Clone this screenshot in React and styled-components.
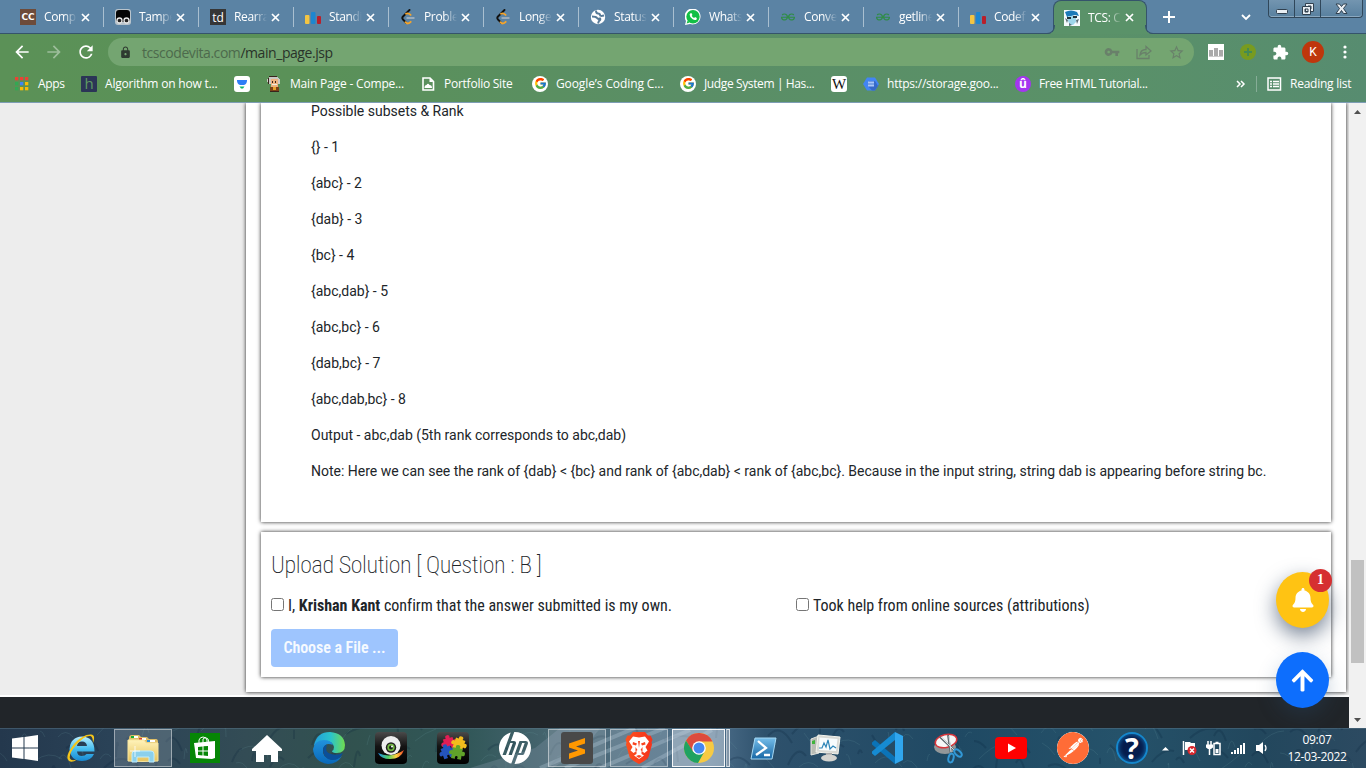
import React from "react";
import styled, { createGlobalStyle, css } from "styled-components";
import { MdVpnKey, MdStarBorder, MdExtension, MdLock, MdRefresh, MdArrowBack, MdArrowForward } from "react-icons/md";
import { FaBell, FaArrowUp } from "react-icons/fa";
import { FcGoogle } from "react-icons/fc";
import { SiGeeksforgeeks, SiHp, SiPostman } from "react-icons/si";

const Global = createGlobalStyle`
  * { box-sizing: border-box; }
  html, body { margin: 0; height: 100%; overflow: hidden; }
  svg { display: block; flex: none; }
`;

const ui = css`
  font-family: "Open Sans", "Noto Sans", sans-serif;
  font-size: 12px;
  letter-spacing: ${(p) => p.$ls ?? -0.35}px;
  white-space: nowrap;
`;

const Desktop = styled.div`
  width: 1366px;
  height: 768px;
  display: flex;
  flex-direction: column;
  background: #fff;
  overflow: hidden;
`;

/* ---------- browser chrome ---------- */
const TabStrip = styled.div`
  height: 34px;
  flex: none;
  display: flex;
  padding-left: 9px;
  background: #5b83a4;
  border-bottom: 1px solid #35546b;
`;
const Tab = styled.div`
  width: 95px;
  height: 33px;
  flex: none;
  display: flex;
  align-items: center;
  padding: 1px 0 0 11px;
  background: linear-gradient(#a9bfd0, #a9bfd0) right 0 top 7px / 1px 20px no-repeat;
`;
const ActiveTab = styled(Tab)`
  position: relative;
  width: 94px;
  height: 34px;
  margin-left: -1px;
  padding: 0 0 0 10px;
  border: 1px solid #35546b;
  border-bottom: 0;
  border-radius: 8px 8px 0 0;
  background: #5a9269;
  &::before, &::after {
    content: "";
    position: absolute;
    bottom: 0;
    width: 8px;
    height: 8px;
    border-bottom: 1px solid #35546b;
  }
  &::before { left: -8px; border-right: 1px solid #35546b; border-radius: 0 0 8px 0; box-shadow: 3px 3px 0 1px #5a9269; clip-path: inset(0 -1px 0 0); }
  &::after { right: -8px; border-left: 1px solid #35546b; border-radius: 0 0 0 8px; box-shadow: -3px 3px 0 1px #5a9269; clip-path: inset(0 0 0 -1px); }
`;
const Favicon = styled.div`
  width: 16px;
  height: 16px;
  flex: none;
  display: flex;
  align-items: center;
  justify-content: center;
  overflow: hidden;
  border-radius: ${(p) => p.$r || 0}px;
  background: ${(p) => p.$bg || "transparent"};
  color: ${(p) => p.$fg || "#fff"};
  font: ${(p) => p.$font || 'bold 10px/16px "Liberation Sans", sans-serif'};
`;
const TabTitle = styled.div`
  ${ui}
  width: 33px;
  margin-left: 8px;
  overflow: hidden;
  color: #fff;
  line-height: 18px;
  mask-image: linear-gradient(90deg, #000 60%, transparent 100%);
`;
const TabClose = styled.div`
  margin-left: 4px;
`;
const NewTab = styled.div`
  width: 40px;
  display: flex;
  align-items: center;
  justify-content: center;
  margin-left: 2px;
`;
const StripEnd = styled.div`
  margin-left: auto;
  display: flex;
  margin-right: 3px;
`;
const Chevron = styled.div`
  padding: 14px 17px 0 0;
`;
const WinButtons = styled.div`
  display: flex;
  height: 18px;
  border: 1px solid #30475a;
  border-top: 0;
  border-radius: 0 0 4px 4px;
  background: linear-gradient(#7395b0, #58809f);
  box-shadow: inset 0 -1px 0 #8ba8bf;
`;
const WinButton = styled.div`
  width: ${(p) => p.$w}px;
  display: flex;
  align-items: center;
  justify-content: center;
  & + & { border-left: 1px solid #30475a; }
`;
const Toolbar = styled.div`
  height: 69px;
  flex: none;
  background: linear-gradient(90deg, #5b9157 0%, #5a9158 22%, #5a8e66 50%, #5a9168 80%, #578c70 100%);
  border-bottom: 1px solid #7d9db5;
`;
const NavRow = styled.div`
  display: flex;
  height: 36px;
  align-items: center;
  padding: 0 0 0 12px;
`;
const NavIcon = styled.div`
  width: 32px;
  display: flex;
  color: #fff;
  opacity: ${(p) => (p.$off ? 0.4 : 1)};
`;
const Omnibox = styled.div`
  width: 1086px;
  height: 28px;
  border-radius: 14px;
  background: #74a571;
  display: flex;
  align-items: center;
  padding: 0 9px 0 11px;
  color: #2e3a30;
`;
const Url = styled.div`
  ${ui}
  font-size: 14px;
  margin-left: 10px;
  color: #293329;
  flex: 1;
  span { color: #4d6a4c; }
`;
const OmniIcons = styled.div`
  display: flex;
  align-items: center;
  gap: 16px;
  color: #69806a;
`;
const Extensions = styled.div`
  display: flex;
  align-items: center;
  gap: 16px;
  margin-left: 14px;
  color: #fff;
`;
const Avatar = styled.div`
  width: 22px;
  height: 22px;
  margin: 0 -3px;
  border-radius: 50%;
  background: #bf360c;
  color: #fff;
  font: 12px/22px Roboto, sans-serif;
  text-align: center;
`;
const Bookmarks = styled.div`
  display: flex;
  height: 28px;
  align-items: center;
  margin-top: -1px;
  padding: 1px 0 0 14px;
`;
const Bookmark = styled.div`
  display: flex;
  align-items: center;
  width: ${(p) => p.$w}px;
  flex: none;
`;
const BookmarkText = styled.div`
  ${ui}
  color: #fff;
  margin-left: 8px;
`;
const Divider = styled.div`
  width: 1px;
  height: 16px;
  background: #86ad97;
  margin-right: 10px;
`;

/* ---------- web page ---------- */
const Viewport = styled.div`
  height: 625px;
  flex: none;
  display: flex;
  overflow: hidden;
  position: relative;
`;
const Page = styled.div`
  width: 1349px;
  display: flex;
  flex-direction: column;
  color: #212529;
`;
const Body = styled.div`
  height: 592px;
  background: #ededed;
  padding: 0 3px 3px 246px;
`;
const Sheet = styled.div`
  height: 589px;
  background: #fff;
  box-shadow: 0 0 4px 0 #222;
  padding: 0 15px;
  display: flex;
  flex-direction: column;
  gap: 10px;
`;
const Card = styled.div`
  height: ${(p) => p.$h}px;
  flex: none;
  background: #fff;
  box-shadow: 0 0 4px 0 #222;
`;
const Question = styled(Card)`
  padding: 0 50px;
  font: 14px/21px Roboto, sans-serif;
  letter-spacing: -0.005px;
  p { margin: 0 0 15px; white-space: nowrap; }
  p:first-child { margin-top: -2px; }
`;
const Upload = styled(Card)`
  padding: 19px 10px 0;
  font-family: "Roboto Condensed", Roboto, sans-serif;
  font-stretch: 75%;
`;
const Title = styled.h4`
  margin: 0;
  font-size: 24px;
  line-height: 29px;
  font-weight: 250;
  letter-spacing: -0.37px;
  white-space: nowrap;
`;
const Checks = styled.div`
  display: grid;
  grid-template-columns: 525px 1fr;
  margin-top: 13px;
`;
const Check = styled.label`
  display: flex;
  align-items: center;
  height: 24px;
  font-size: 16px;
  letter-spacing: -0.01px;
  white-space: pre;
`;
const Box = styled.span`
  width: 13px;
  height: 13px;
  margin: 0 4px 2px 0;
  border: 1px solid #767676;
  border-radius: 2.5px;
  background: #fff;
`;
const FileButton = styled.button`
  display: block;
  width: 127px;
  height: 38px;
  margin-top: 12px;
  padding: 0 0 2px;
  border: 0;
  border-radius: 4px;
  background: #9ec5fe;
  color: #f6faff;
  font: inherit;
  font-stretch: 75%;
  font-weight: 600;
  font-size: 16px;
  letter-spacing: -0.06px;
  white-space: nowrap;
`;
const Footer = styled.div`
  height: 31px;
  margin-top: 2px;
  background: #212529;
`;
const Scrollbar = styled.div`
  width: 17px;
  background: #f1f1f1;
  display: flex;
  flex-direction: column;
  align-items: center;
`;
const Thumb = styled.div`
  width: 13px;
  height: 103px;
  margin-top: 440px;
  margin-bottom: 47px;
  background: #c1c1c1;
`;
const Floating = styled.div`
  position: absolute;
  left: 1276px;
  top: ${(p) => p.$top}px;
  width: 53px;
  height: 56px;
  border-radius: 50%;
  background: ${(p) => p.$bg};
  box-shadow: 0 8px 20px ${(p) => p.$glow};
  color: #fff;
  display: flex;
  align-items: center;
  justify-content: center;
`;
const Badge = styled.div`
  position: absolute;
  left: 33px;
  top: -3px;
  width: 23px;
  height: 23px;
  border-radius: 50%;
  background: #d63031;
  font: bold 14px/22px "Liberation Serif", serif;
  text-align: center;
`;

/* ---------- taskbar ---------- */
const Taskbar = styled.div`
  height: 40px;
  flex: none;
  display: flex;
  align-items: center;
  position: relative;
  isolation: isolate;
  background: linear-gradient(90deg, #24384d 0%, #2a4257 8%, #334c55 18%, #31524f 26%, #315758 34%, #4b6875 42%, #4f708c 52%, #2e516c 56%, #1f4963 70%, #25526a 82%, #22475d 92%, #2c4a61 100%);
`;
const Texture = styled.svg`
  position: absolute;
  inset: 0;
  z-index: -1;
`;
const Slot = styled.div`
  width: ${(p) => p.$w || 62}px;
  height: 40px;
  flex: none;
  display: flex;
  align-items: center;
  justify-content: center;
`;
const Running = styled.div`
  width: ${(p) => p.$w || 58}px;
  height: 38px;
  display: flex;
  align-items: center;
  justify-content: center;
  border: 1px solid rgba(255, 255, 255, ${(p) => (p.$on ? 0.9 : 0.45)});
  background: rgba(210, 220, 230, ${(p) => (p.$on ? 0.5 : 0.2)});
`;
const Stacked = styled.div`
  width: 4px;
  height: 38px;
  margin-left: 1px;
  border: 1px solid #dbe2e8;
  border-left-color: #b8c5d0;
  background: #8296a8;
`;
const AppTile = styled.div`
  width: 32px;
  height: 32px;
  border-radius: 3px;
  background: ${(p) => p.$bg};
  display: flex;
  align-items: center;
  justify-content: center;
`;
const Round = styled.div`
  width: 32px;
  height: 32px;
  border-radius: 50%;
  display: flex;
  align-items: center;
  justify-content: center;
  overflow: hidden;
  background: ${(p) => p.$bg};
  color: ${(p) => p.$fg || "#fff"};
`;
const HelpMark = styled(Round)`
  border: 2px solid #1587cc;
  box-shadow: inset 0 0 5px #1779bd;
  font: bold 29px/28px "Open Sans", sans-serif;
`;
const Tray = styled.div`
  display: flex;
  align-items: center;
  gap: 9px;
  margin-left: 1px;
`;
const Clock = styled.div`
  ${ui}
  width: 70px;
  margin-left: 13px;
  text-align: center;
  line-height: 17px;
  color: #fff;
`;

const X = () => (
  <svg width="9" height="9" viewBox="0 0 9 9"><path d="M1 1l7 7M8 1l-7 7" stroke="#fff" strokeWidth="1.7" /></svg>
);
const Bars = () => (
  <svg width="16" height="16"><rect y="6" width="4.5" height="9" rx="1" fill="#f4c542" /><rect x="6" y="3" width="4.5" height="12" rx="1" fill="#1d86d0" /><rect x="12" y="7" width="4" height="8" rx="1" fill="#b91f2b" /></svg>
);
const Leet = () => (
  <svg width="16" height="16" viewBox="0 0 16 16" fill="none" strokeLinecap="round" strokeWidth="1.9"><path d="M9.5 1L3 7.5c-1 1-1 2 0 3L6 13.7" stroke="#111" /><path d="M6 4.8c1.6-1 2.8-.6 4.6 1.1M5.5 13.2c1.8 2 3.4 1.4 5.2-.4" stroke="#f5a42a" /><path d="M7 9h7" stroke="#aebbc5" strokeWidth="1.4" /></svg>
);
const Globe = () => (
  <svg width="16" height="16"><circle cx="8" cy="8" r="7.2" fill="#fff" /><path d="M2 7.500q4 0 5 1.500t3 .5q1 1-1 2.500l-1 2.500M6 1.500q0 3 2 3t2 1.500 4 .5" fill="none" stroke="#557997" strokeWidth="2" /></svg>
);
const Whats = () => (
  <svg width="16" height="16" viewBox="0 0 16 16"><path d="M0 16l1-4A8 8 0 1 1 5 15z" fill="#fff" /><circle cx="8" cy="7.8" r="6.7" fill="#12bf45" /><path d="M1.600 14.600l1-3 2 2z" fill="#12bf45" /><path d="M5.4 4.2l1.3.1.7 1.7-.7.8q.9 1.6 2.5 2.3l.8-1 1.8.9-.2 1.4q-1.5 1.3-3.9-.1Q4.6 8.300 4.600 5.500z" fill="#fff" /></svg>
);
const Tamper = () => (
  <svg width="16" height="16"><rect width="16" height="16" rx="3" fill="#b9c4cc" /><rect x="1" y="1" width="14" height="12" rx="3" fill="#050505" /><g fill="#222" stroke="#e8e8e8" strokeWidth="1.3"><circle cx="4.500" cy="11.500" r="2.500" /><circle cx="11.500" cy="11.500" r="2.500" /></g></svg>
);
const TcsIcon = () => (
  <svg width="16" height="16"><rect width="16" height="16" fill="#f5fafc" /><path d="M1 2q6-3 12 0l2 4-4-1-8 2z" fill="#1c79b8" /><path d="M4 6h8v6l-3 3H6l-2-4z" fill="#9ed6ea" /><path d="M3 7h4v2H3zM9 6h4v2H9z" fill="#24323a" /><path d="M1 8l3 2-1 3zM12 10l3-1-2 5zM5 13l3 2-3 1z" fill="#5a6d77" /></svg>
);
const AppsGrid = () => (
  <svg width="16" height="16">
    {["#ea4335", "#ea4335", "#ea4335", "#34a853", "#4285f4", "#fbbc05", "#34a853", "#fbbc05", "#fbbc05"].map((c, i) => (
      <rect key={i} x={1 + (i % 3) * 5} y={1 + Math.floor(i / 3) * 5} width="3.300" height="3.300" fill={c} />
    ))}
  </svg>
);
const Funnel = () => (
  <svg width="16" height="16"><rect width="16" height="16" rx="3" fill="#fff" /><path d="M3 4h10v1q-.5 3.500-3 4H6Q3.500 8.500 3 5z" fill="#2e7df6" /><path d="M5.500 10.500h5l-1.500 2H7z" fill="#11b36b" /></svg>
);
const Einstein = () => (
  <svg width="16" height="16" shapeRendering="crispEdges"><path d="M3 1h9l2 3v4H2L1 4z" fill="#c9c9c4" /><path d="M5 3h7v8H5z" fill="#eeb27e" /><path d="M6 5h1v2H6zM9 5h1v2H9z" fill="#3c241c" /><path d="M6 8h5v1H6z" fill="#ecece6" /><path d="M4 11h9v4H4z" fill="#7b4217" /><path d="M7 11h3v3H7z" fill="#e7a12c" /><path d="M2 2h1v6H2zM4 15h9v1H4zM3 0h8v1H3z" fill="#38241c" /></svg>
);
const PageIcon = () => (
  <svg width="16" height="16"><path d="M3 2h7l3.500 3.500V14H3z" fill="none" stroke="#fff" strokeWidth="1.600" /><path d="M9.500 2v4h4M4.500 12q0-3 2-3 1.500-2.500 3 0 2.500 0 2.500 3z" fill="#fff" /></svg>
);
const Hexagon = () => (
  <svg width="16" height="16"><path d="M4 1.500h8L16 8l-4 6.500H4L0 8z" fill="#4285f4" /><path d="M6 5l6 0 3 5-3 4.500H9L5 10z" fill="#3669c8" /><rect x="5" y="5.500" width="6" height="5" fill="#a9c6f8" /><path d="M5 8h6" stroke="#4d7fd2" /></svg>
);
const ReadIcon = () => (
  <svg width="15" height="14" fill="none" stroke="#fff" strokeWidth="1.500"><rect x="1" y="1" width="12.500" height="12" /><path d="M3 4.500h2M6 4.500h6M3 7h2M6 7h6M3 9.500h2M6 9.500h6" /></svg>
);
const Share = () => (
  <svg width="16" height="16" fill="none" stroke="currentColor" strokeWidth="1.300"><path d="M1 5v9.500h12V11" /><path d="M4 11q.5-5.500 6-5.500V2.500L15 7l-5 4V8.500Q6 8.500 4 11z" /></svg>
);
const ExtBars = () => (
  <svg width="16" height="16"><path fill="#fff" d="M0 0h16v16H0z" /><path d="M1 6h4v6H1zM6 4h4v8H6zM11 6h4v6h-4z" fill="#aaa" /><path d="M1 12h14v1H1z" fill="#ccc" /></svg>
);
const PlusDot = () => (
  <svg width="16" height="16"><circle cx="8" cy="8" r="8" fill="#789b20" /><path d="M4 8h8M8 4v8" stroke="#438a55" strokeWidth="1.800" /></svg>
);
const Caret = ({ down }) => (
  <svg width="17" height="17"><path d={down ? "M5 8h7l-3.500 4z" : "M5 11h7L8.500 7z"} fill="#505050" /></svg>
);

const IE = () => (
  <svg width="32" height="32" viewBox="0 0 32 32"><defs><linearGradient id="ie" x2="0" y2="1"><stop stopColor="#b9efff" /><stop offset=".5" stopColor="#48bff0" /><stop offset="1" stopColor="#1688d2" /></linearGradient></defs><path d="M29.500 19.500H12q.5 4.500 5 4.500 3 0 4.500-2H29q-3 7-12 7Q5.500 29 4.500 17 5.500 5 17 4.500q12.500 .5 12.500 15zM12 14h10Q21.500 9.500 17 9.500T12 14z" fill="url(#ie)" /><path d="M28 11q3-8-2-8.500Q18 2 9 12-1 25 4 29q3 2 8-1.500-6 2-7-1Q3.500 22 11 13 20 3 25.500 4q2.500 1 2.500 7z" fill="#f5c51a" /></svg>
);
const Folder = () => (
  <svg width="34" height="32" viewBox="0 0 34 32"><defs><linearGradient id="fold" x2="0" y2="1"><stop stopColor="#fff3ba" /><stop offset="1" stopColor="#e7c35b" /></linearGradient></defs><path d="M3 6q0-3 3-3h7l2 2h6l2 2h7q2 0 2 3v18H3z" fill="#dfbf68" /><path d="M5 4h5v2H5z" fill="#18ae35" /><path d="M13 6h5v2h-5z" fill="#dd3d28" /><path d="M21 8h7v2h-7z" fill="#278fda" /><path d="M8 4h4v2H8zM16 6h4v2h-4zM24 8h5v2h-5z" fill="#fff" /><path d="M2 8h16l2 3h12v18q-15 1-30 0z" fill="url(#fold)" stroke="#f8e5a0" /><path d="M6 30V22q0-3 3-3h16q3 0 3 3v8h-5v-5H11v5z" fill="#8bd0ec" stroke="#bcecff" /><path d="M9 14v11M4 19h10" stroke="#fff" strokeOpacity=".8" /></svg>
);
const Store = () => (
  <svg width="30" height="30"><path fill="#068606" d="M0 0h30v30H0z" /><path d="M9 10V7q1-3 4-3t4 3v3M13 10V6q2-3 5 0l1 4" fill="none" stroke="#fff" /><path d="M4 10l21-2v17l-3 1L6 25z" fill="#fff" /><path d="M8 14l4.500-.5v4H8zM13.500 13.300l4.500-.4v4.600h-4.500zM8 18.500h4.500v4L8 22zM13.500 18.500H18v4.600l-4.500-.5z" fill="#068606" /></svg>
);
const EdgeIcon = () => (
  <svg width="32" height="32" viewBox="0 0 32 32"><defs><linearGradient id="edA"><stop stopColor="#219fdd" /><stop offset=".55" stopColor="#2bc4ca" /><stop offset="1" stopColor="#71db4e" /></linearGradient><linearGradient id="edB" x2="0" y2="1"><stop stopColor="#2192dc" /><stop offset="1" stopColor="#0968b8" /></linearGradient></defs><path d="M1 13Q4 0 17 0q14 1 15 13 0 8-8 8-5 0-5-2 2-1 2-4-1-6-9-6Q5 9 1 14z" fill="url(#edA)" /><path d="M0 17q2-9 11-9 7 0 9 5-8-3-10 4-1 8 7 10 7 1 12-3-5 8-14 8Q1 30 0 17z" fill="url(#edB)" /><path d="M10 17q1-4 4-4-3 7 4 9 6 2 12-1-4 8-12 7-8-2-8-11z" fill="#0b4f99" /></svg>
);
const Webcam = () => (
  <svg width="32" height="32"><defs><linearGradient id="blk" x2="0" y2="1"><stop stopColor="#4a4a4a" /><stop offset=".45" stopColor="#141414" /><stop offset="1" stopColor="#000" /></linearGradient><linearGradient id="rain"><stop stopColor="#1d8be9" /><stop offset=".4" stopColor="#54d263" /><stop offset=".7" stopColor="#ffd23e" /><stop offset="1" stopColor="#ef4226" /></linearGradient></defs><rect width="32" height="32" rx="4" fill="url(#blk)" /><path d="M3 21q13 6 26-3-3 9-14 9Q6 27 3 21z" fill="url(#rain)" /><circle cx="16" cy="13.500" r="9.500" fill="#eee" /><circle cx="16" cy="15.500" r="5.200" fill="#222" /><circle cx="16" cy="15.500" r="3.700" fill="#71b640" /><circle cx="16" cy="15.500" r="2" fill="#172217" /><circle cx="17" cy="14.500" r="1" fill="#fff" /></svg>
);
const PuzzlePiece = ({ x, y, r, c }) => (
  <path transform={`translate(${x} ${y}) rotate(${r})`} fill={c} d="M-5-5h3q-1-3 2-3t2 3h3v3q3-1 3 2t-3 2v4H1q1-3-1-3t-1 3h-4V2q-3 1-3-1.500T-5-2z" />
);
const Puzzle = () => (
  <svg width="32" height="32"><rect width="32" height="32" rx="4" fill="url(#blk)" /><PuzzlePiece x={12} y={11} r={-15} c="#e21e55" /><PuzzlePiece x={22} y={12} r={20} c="#f2bc1d" /><PuzzlePiece x={10} y={20} r={-20} c="#2454bd" /><PuzzlePiece x={20} y={21} r={10} c="#61a32a" /></svg>
);
const Sublime = () => (
  <svg width="32" height="32"><path d="M8 11.500L24 6v5.500l-9 3 9 3v4L8 27v-5.500l9-3-9-3z" fill="#ff9800" /></svg>
);
const Brave = () => (
  <svg width="28" height="32" viewBox="0 0 28 32"><defs><linearGradient id="brv"><stop stopColor="#fb5220" /><stop offset="1" stopColor="#f5321b" /></linearGradient></defs><path d="M8 0h12l3 3.500h2.500l2 4-1 3 .5 2-3.500 12.500Q22 28 14 32 6 28 4.500 25L1 12.500l.5-2-1-3 2-4H5z" fill="url(#brv)" /><path d="M8 4.500l6 1 6-1 4 5-3.500 5.500 2 3.500-3 2.500-3-2 0 3 2.500 1.500-5 3.500-5-3.500 2.500-1.500v-3l-3 2-3-2.500 2-3.500L4 9.500z" fill="#fff" /><path d="M8 10l4 1.500-1 2-3.500-1zM20 10l-4 1.500 1 2 3.500-1zM10.500 15l2 3-2 1.500zM17.500 15l-2 3 2 1.500zM13 9h2l-1 7zM11 24l3-1 3 1-3 2z" fill="#f84420" /></svg>
);
const Chrome = () => (
  <svg width="30" height="30" viewBox="0 0 30 30"><circle cx="15" cy="15" r="15" fill="#f7ca43" /><path d="M2 7.500A15 15 0 0 1 28.500 8.500H15L8.500 18.500z" fill="#dd4b3e" /><path d="M2 7.500A15 15 0 0 0 14 30l6.500-11.500H9z" fill="#20a261" /><circle cx="15" cy="15" r="6.800" fill="#fff" /><circle cx="15" cy="15" r="5.500" fill="#4688f1" /></svg>
);
const PowerShell = () => (
  <svg width="27" height="23"><defs><linearGradient id="ps" x2="0" y2="1"><stop stopColor="#75bde9" /><stop offset="1" stopColor="#1767a5" /></linearGradient></defs><path d="M5 1h21l-4 21H1z" fill="url(#ps)" stroke="#a5d8f3" /><path d="M8 4l8 7-10 7M14 18h6" fill="none" stroke="#fff" strokeWidth="2.300" /></svg>
);
const Monitor = () => (
  <svg width="32" height="32"><path d="M2 7l8-3v17l-8 2z" fill="#b9bcb5" stroke="#e5e5df" /><path d="M3 9l3-1v4H3z" fill="#3fb43b" /><path d="M9 3l22 2-2 17L7 20z" fill="#d9dad5" stroke="#f5f5ee" /><path d="M10.500 5.500L28.500 7 27 19l-17-1z" fill="#f8fcfd" /><path d="M10 16h3l2-5 2 4 2-7 2 9 3-3 3 2" fill="none" stroke="#2f86b8" strokeWidth="1.200" /><path d="M17 21h6v4h-6z" fill="#aaa" /><ellipse cx="20" cy="26" rx="8" ry="3.500" fill="#d3d3cf" /></svg>
);
const VSCode = () => (
  <svg width="32" height="32"><path d="M1 10.500l3-2.500 20 17v7L1 12.500z" fill="#0b73b7" /><path d="M1 21.500L4 24 24 8V0L1 19.500z" fill="#168bd2" /><path d="M24 0l8 4v24l-8 4z" fill="#30a6ee" /></svg>
);
const Snip = () => (
  <svg width="32" height="32"><ellipse cx="12" cy="15" rx="11" ry="7" fill="#939799" /><ellipse cx="13" cy="9" rx="11" ry="6.500" transform="rotate(-14 13 9)" fill="#f6f6f6" stroke="#d7353b" strokeWidth="1.500" /><path d="M7 5l15 14M15 3l3 20" stroke="#626a70" strokeWidth="2" /><path d="M8 5l14 14M16 4l2 16" stroke="#d6dce0" /><g fill="none" stroke="#3298d6" strokeWidth="2"><ellipse cx="18" cy="26" rx="2.500" ry="4.500" transform="rotate(15 18 26)" /><ellipse cx="25" cy="21" rx="2.500" ry="4.500" transform="rotate(-45 25 21)" /></g></svg>
);
const YouTube = () => (
  <svg width="32" height="22"><rect width="32" height="22" rx="4" fill="#f00" /><path d="M13 6.500l8 4.500-8 4.500z" fill="#fff" /></svg>
);
const Grass = () => {
  const blades = Array.from({ length: 170 }, (_, i) => {
    const x = (i * 83) % 1366;
    const y = (i * 29) % 44;
    const dx = ((i * 17) % 46) - 18;
    return `M${x} ${y}q${dx / 2} ${-14 + (i % 9)} ${dx} ${(i * 13) % 30 - 17}`;
  });
  return (
    <Texture width="1366" height="40" fill="none">
      <path d={blades.filter((_, i) => i % 2).join("")} stroke="#73a3a5" strokeOpacity=".16" />
      <path d={blades.filter((_, i) => !(i % 2)).join("")} stroke="#061f37" strokeOpacity=".2" strokeWidth="2" />
      <path d="M470 40l65-20 25-20 40 0-12 16-35 24z" fill="#7e91a2" fillOpacity=".35" />
      <path d="M540 40l95-40M565 40l100-40M600 40l90-38M642 40l70-38" stroke="#c3d6e5" strokeOpacity=".28" strokeWidth="4" />
      <path d="M0 .5h1366" stroke="#587486" strokeOpacity=".5" />
    </Texture>
  );
};

const gfg = <SiGeeksforgeeks size={14} color="#2f8d46" />;
const tabs = [
  ["Comp", <Favicon key="f" $bg="#6d4b3a" $font='bold 9px/16px "DejaVu Sans", sans-serif'>CC</Favicon>],
  ["Tampe", <Tamper key="f" />],
  ["Rearra", <Favicon key="f" $bg="#363636" $font='12px/15px "Open Sans", sans-serif'>td</Favicon>],
  ["Standi", <Bars key="f" />],
  ["Proble", <Leet key="f" />],
  ["Longe", <Leet key="f" />],
  ["Status", <Globe key="f" />],
  ["Whats", <Whats key="f" />],
  ["Conve", <Favicon key="f">{gfg}</Favicon>],
  ["getline", <Favicon key="f">{gfg}</Favicon>],
  ["Codef", <Bars key="f" />],
];
const google = <Favicon $bg="#fff" $r={8}><FcGoogle size={13} /></Favicon>;
const bookmarks = [
  [67, <AppsGrid key="i" />, "Apps", -0.3],
  [153, <Favicon key="i" $bg="#2b3556" $fg="#5f9a62" $r={1} $font='15px/15px "Open Sans", sans-serif'>h</Favicon>, "Algorithm on how t...", -0.2],
  [32, <Funnel key="i" />],
  [154, <Einstein key="i" />, "Main Page - Compe...", -0.18],
  [112, <PageIcon key="i" />, "Portfolio Site", -0.25],
  [148, google, "Google’s Coding C...", -0.1],
  [151, google, "Judge System | Has...", -0.38],
  [32, <Favicon key="i" $bg="#fff" $fg="#111" $r={3} $font='15px/16px "Liberation Serif", serif'>W</Favicon>],
  [152, <Hexagon key="i" />, "https://storage.goo...", -0.23],
  [221, <Favicon key="i" $bg="#a435f0" $r={8} $font='bold 12px/16px "Open Sans", sans-serif'>û</Favicon>, "Free HTML Tutorial..."],
];
const lines = [
  "Possible subsets & Rank",
  "{} - 1",
  "{abc} - 2",
  "{dab} - 3",
  "{bc} - 4",
  "{abc,dab} - 5",
  "{abc,bc} - 6",
  "{dab,bc} - 7",
  "{abc,dab,bc} - 8",
  "Output - abc,dab (5th rank corresponds to abc,dab)",
  "Note: Here we can see the rank of {dab} < {bc} and rank of {abc,dab} < rank of {abc,bc}. Because in the input string, string dab is appearing before string bc.",
];

export default function App() {
  return (
    <Desktop>
      <Global />
      <TabStrip>
        {tabs.map(([title, icon], i) => (
          <Tab key={i}>{icon}<TabTitle>{title}</TabTitle><TabClose><X /></TabClose></Tab>
        ))}
        <ActiveTab><TcsIcon /><TabTitle>TCS: C</TabTitle><TabClose><X /></TabClose></ActiveTab>
        <NewTab><svg width="12" height="12"><path d="M6 0v12M0 6h12" stroke="#fff" strokeWidth="2" /></svg></NewTab>
        <StripEnd>
          <Chevron><svg width="10" height="7"><path d="M1 1l4 4 4-4" fill="none" stroke="#fff" strokeWidth="1.800" /></svg></Chevron>
          <WinButtons>
            <WinButton $w={25}><svg width="12" height="16"><rect x=".5" y="8.500" width="11" height="4" rx="1" fill="#e8eef3" stroke="#30404f" /></svg></WinButton>
            <WinButton $w={26}><svg width="14" height="14" fill="#e8eef3" stroke="#30404f"><path fillRule="evenodd" d="M4.500 1.500h8v8h-8zM7 4v3h3V4z" /><path fillRule="evenodd" d="M1.500 4.500h8v8h-8zM4 7v3h3V7z" /></svg></WinButton>
            <WinButton $w={42}><svg width="13" height="12"><path d="M1 1h3.500l2 2.500L8.500 1H12L8.500 5.500l3.500 5H8.500l-2-3-2 3H1l3.500-5z" fill="#e8eef3" stroke="#30404f" /></svg></WinButton>
          </WinButtons>
        </StripEnd>
      </TabStrip>
      <Toolbar>
        <NavRow>
          <NavIcon><MdArrowBack size={20} /></NavIcon>
          <NavIcon $off><MdArrowForward size={20} /></NavIcon>
          <NavIcon><MdRefresh size={20} /></NavIcon>
          <Omnibox>
            <MdLock size={13} />
            <Url $ls={-0.44}><span>tcscodevita.com</span>/main_page.jsp</Url>
            <OmniIcons><MdVpnKey size={16} /><Share /><MdStarBorder size={17} /></OmniIcons>
          </Omnibox>
          <Extensions>
            <ExtBars />
            <PlusDot />
            <MdExtension size={17} />
            <Avatar>K</Avatar>
            <svg width="16" height="16" fill="#fff"><circle cx="8" cy="3" r="1.600" /><circle cx="8" cy="8" r="1.600" /><circle cx="8" cy="13" r="1.600" /></svg>
          </Extensions>
        </NavRow>
        <Bookmarks>
          {bookmarks.map(([w, icon, text, ls], i) => (
            <Bookmark key={i} $w={w}>{icon}{text && <BookmarkText $ls={ls}>{text}</BookmarkText>}</Bookmark>
          ))}
          <Bookmark $w={20}>
            <svg width="10" height="8"><path d="M1 1l3 3-3 3M5 1l3 3-3 3" fill="none" stroke="#fff" strokeWidth="1.500" /></svg>
          </Bookmark>
          <Divider />
          <ReadIcon />
          <BookmarkText $ls={-0.25}>Reading list</BookmarkText>
        </Bookmarks>
      </Toolbar>
      <Viewport>
        <Page>
          <Body>
            <Sheet>
              <Question $h={419}>{lines.map((l) => <p key={l}>{l}</p>)}</Question>
              <Upload $h={145}>
                <Title>Upload Solution [ Question : B ]</Title>
                <Checks>
                  <Check><Box />I, <b>Krishan Kant</b> confirm that the answer submitted is my own.</Check>
                  <Check><Box />Took help from online sources (attributions)</Check>
                </Checks>
                <FileButton>Choose a File ...</FileButton>
              </Upload>
            </Sheet>
          </Body>
          <Footer />
        </Page>
        <Scrollbar><Caret /><Thumb /><Caret down /></Scrollbar>
        <Floating $top={469} $bg="#ffc313" $glow="rgba(33,53,83,.6)">
          <FaBell size={24} />
          <Badge>1</Badge>
        </Floating>
        <Floating $top={549} $bg="#0d6efd" $glow="rgba(45,85,125,.25)"><FaArrowUp size={25} /></Floating>
      </Viewport>
      <Taskbar>
        <Grass />
        <Slot $w={50}><svg width="26" height="26" fill="#fff"><path d="M0 3.500L11.500 2v10.500H0zM12.500 1.900L26 0v12.500H12.500zM0 13.500h11.500V24L0 22.500zM12.500 13.500H26V26l-13.500-2z" /></svg></Slot>
        <Slot><IE /></Slot>
        <Slot><Running><Folder /></Running></Slot>
        <Slot><Store /></Slot>
        <Slot><svg width="30" height="27" fill="#fff"><path d="M15 0l15 14v2h-4v11h-7v-7h-7v7H4V16H0v-2z" /></svg></Slot>
        <Slot><EdgeIcon /></Slot>
        <Slot><Webcam /></Slot>
        <Slot><Puzzle /></Slot>
        <Slot><SiHp size={32} color="#fff" /></Slot>
        <Slot><Running><AppTile $bg="#494949"><Sublime /></AppTile></Running></Slot>
        <Slot><Running><Brave /></Running></Slot>
        <Slot><Running $on $w={53}><Chrome /></Running><Stacked /></Slot>
        <Slot><PowerShell /></Slot>
        <Slot><Monitor /></Slot>
        <Slot><VSCode /></Slot>
        <Slot><Snip /></Slot>
        <Slot><YouTube /></Slot>
        <Slot><Round $bg="#fff" $fg="#ff6c37"><SiPostman size={32} /></Round></Slot>
        <Slot $w={56}><HelpMark $bg="#061d4d">?</HelpMark></Slot>
        <Tray>
          <svg width="9" height="5"><path d="M1 4.500h7L4.500 1z" fill="#fff" /></svg>
          <svg width="18" height="16"><path d="M4.500 1v14" stroke="#fff" strokeWidth="1.500" /><path d="M6 2h5l1 1h4v7H6z" fill="#fff" /><circle cx="13" cy="10.500" r="4.500" fill="#d9262c" /><path d="M11 8.500l4 4M15 8.500l-4 4" stroke="#fff" strokeWidth="1.500" /></svg>
          <svg width="15" height="16" fill="none" stroke="#fff"><path d="M2 1v4M5 1v4M3.500 8v7" strokeWidth="1.500" /><path d="M0 4.500h7v3l-2 1.500H2L0 7.500z" fill="#fff" stroke="none" /><path d="M8 3.500h6v11H8zM9.500 2.500h3" strokeWidth="1.500" /><path d="M9.500 9h3v4h-3z" fill="#fff" stroke="none" /></svg>
          <svg width="16" height="14" fill="#fff"><path d="M1 11h2v2H1zM4 9h2v4H4zM7 7h2v6H7zM10 4h2v9h-2zM13 2h2v11h-2z" /></svg>
          <svg width="14" height="14"><path d="M1 4h3l4-3v12l-4-3H1z" fill="#fff" /><path d="M10 4q2 3 0 6" fill="none" stroke="#fff" strokeWidth="1.300" /></svg>
        </Tray>
        <Clock>09:07<br />12-03-2022</Clock>
      </Taskbar>
    </Desktop>
  );
}
